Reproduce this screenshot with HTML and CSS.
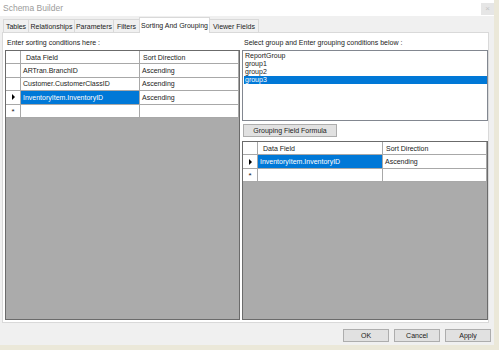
FILE: index.html
```html
<!DOCTYPE html>
<html>
<head>
<meta charset="utf-8">
<link rel="stylesheet" href="styles.css">
</head>
<body>
<div class="window">
  <div class="titlebar">
    <span class="title">Schema Builder</span>
    <span class="close">×</span>
  </div>
  <div class="tabstrip">
    <div class="tab" style="width:26px">Tables</div>
    <div class="tab" style="width:47px">Relationships</div>
    <div class="tab" style="width:40px">Parameters</div>
    <div class="tab" style="width:27px">Filters</div>
    <div class="tab active" style="width:71px">Sorting And Grouping</div>
    <div class="tab" style="width:50px">Viewer Fields</div>
  </div>
  <div class="panel">
    <div class="col left">
      <div class="label">Enter sorting conditions here :</div>
      <div class="grid">
        <div class="row head">
          <div class="rh"></div>
          <div class="c c1 lw">Data Field</div>
          <div class="c c2 lw2">Sort Direction</div>
        </div>
        <div class="row">
          <div class="rh"></div>
          <div class="c c1 lw">ARTran.BranchID</div>
          <div class="c c2 lw2">Ascending</div>
        </div>
        <div class="row">
          <div class="rh"></div>
          <div class="c c1 lw">Customer.CustomerClassID</div>
          <div class="c c2 lw2">Ascending</div>
        </div>
        <div class="row">
          <div class="rh"><span class="arrow"></span></div>
          <div class="c c1 lw sel">InventoryItem.InventoryID</div>
          <div class="c c2 lw2">Ascending</div>
        </div>
        <div class="row">
          <div class="rh"><span class="star">*</span></div>
          <div class="c c1 lw"></div>
          <div class="c c2 lw2"></div>
        </div>
        <div class="fill"></div>
      </div>
    </div>
    <div class="col right">
      <div class="label">Select group and Enter grouping conditions below :</div>
      <div class="listbox">
        <div class="item">ReportGroup</div>
        <div class="item">group1</div>
        <div class="item">group2</div>
        <div class="item sel">group3</div>
      </div>
      <div class="btnrow"><button class="btn formula">Grouping Field Formula</button></div>
      <div class="grid">
        <div class="row head">
          <div class="rh"></div>
          <div class="c c1 rw">Data Field</div>
          <div class="c c2 rw2">Sort Direction</div>
        </div>
        <div class="row">
          <div class="rh"><span class="arrow"></span></div>
          <div class="c c1 rw sel">InventoryItem.InventoryID</div>
          <div class="c c2 rw2">Ascending</div>
        </div>
        <div class="row">
          <div class="rh"><span class="star">*</span></div>
          <div class="c c1 rw"></div>
          <div class="c c2 rw2"></div>
        </div>
        <div class="fill"></div>
      </div>
    </div>
  </div>
  <div class="footer">
    <button class="btn">OK</button>
    <button class="btn">Cancel</button>
    <button class="btn">Apply</button>
  </div>
</div>
</body>
</html>
```

FILE: styles.css
```css
* { box-sizing: border-box; }
html, body { margin: 0; padding: 0; }
body {
  width: 499px;
  height: 350px;
  background: #ebe8d9;
  font-family: "Liberation Sans", Arial, sans-serif;
  font-size: 7px;
  color: #1a1a1a;
  overflow: hidden;
}
.window {
  width: 494px;
  height: 345px;
  background: #f0f0f0;
  display: flex;
  flex-direction: column;
}
.titlebar {
  height: 16px;
  background: #fff;
  display: flex;
  align-items: center;
  justify-content: space-between;
  padding: 0 0 0 3px;
}
.title { color: #9b9b9b; font-size: 8.5px; }
.close {
  width: 13px;
  height: 12px;
  margin-top: 1px;
  background: #e6e6e6;
  color: #c4c4c4;
  font-size: 8px;
  display: flex;
  align-items: center;
  justify-content: center;
}
.tabstrip {
  height: 16px;
  display: flex;
  align-items: flex-end;
  padding-left: 3px;
}
.tab {
  height: 13px;
  border: 1px solid #d9d9d9;
  border-bottom: none;
  margin-right: -1px;
  display: flex;
  align-items: center;
  justify-content: center;
  background: #f0f0f0;
  white-space: nowrap;
}
.tab.active {
  height: 16px;
  background: #fff;
  position: relative;
  z-index: 1;
  margin-bottom: -1px;
  padding-bottom: 1px;
}
.panel {
  margin: 0 5px 0 2px;
  height: 291px;
  background: #fff;
  border: 1px solid #d9d9d9;
  display: flex;
  padding: 0 1px 2px 2px;
  gap: 2px;
}
.col { display: flex; flex-direction: column; }
.left { width: 235px; }
.right { width: 246px; }
.label {
  height: 17px;
  padding: 6px 0 0 2px;
  white-space: nowrap;
}
.grid {
  flex: 1;
  display: flex;
  flex-direction: column;
  border: 1px solid #6b6b6b;
  background: #ababab;
}
.row {
  display: flex;
  height: 13.4px;
  background: #fff;
  flex-shrink: 0;
}
.rh {
  width: 15px;
  border-right: 1px solid #a8a8a8;
  border-bottom: 1px solid #a8a8a8;
  display: flex;
  align-items: center;
  justify-content: center;
  flex-shrink: 0;
}
.c {
  border-right: 1px solid #a8a8a8;
  border-bottom: 1px solid #a8a8a8;
  padding-left: 2px;
  display: flex;
  align-items: center;
  white-space: nowrap;
  overflow: hidden;
  flex-shrink: 0;
}
.head .c { padding-left: 5px; }
.head .c2 { padding-left: 3px; }
.lw { width: 119px; }
.lw2 { width: 99px; }
.rw { width: 125px; }
.rw2 { width: 104px; }
.sel { background: #0078d7; color: #fff; }
.arrow {
  width: 0; height: 0;
  border-left: 3px solid #000;
  border-top: 3px solid transparent;
  border-bottom: 3px solid transparent;
}
.star { font-size: 8px; line-height: 1; margin-top: 3px; }
.fill { flex: 1; }
.listbox {
  height: 71px;
  border: 1px solid #828790;
  padding: 1px 0 0 1px;
}
.item { height: 8px; line-height: 8px; padding-left: 1px; }
.item.sel { background: #0078d7; color: #fff; }
.btnrow { padding: 3px 0 4px 1px; display: flex; }
.btn {
  font-family: "Liberation Sans", Arial, sans-serif;
  font-size: 7px;
  height: 13px;
  padding: 0;
  background: #e1e1e1;
  border: 1px solid #adadad;
  color: #1a1a1a;
}
.formula { width: 94px; }
.footer {
  flex: 1;
  display: flex;
  justify-content: flex-end;
  align-items: flex-start;
  padding: 6px 3px 0 0;
  gap: 5px;
}
.footer .btn { width: 46px; }
```
